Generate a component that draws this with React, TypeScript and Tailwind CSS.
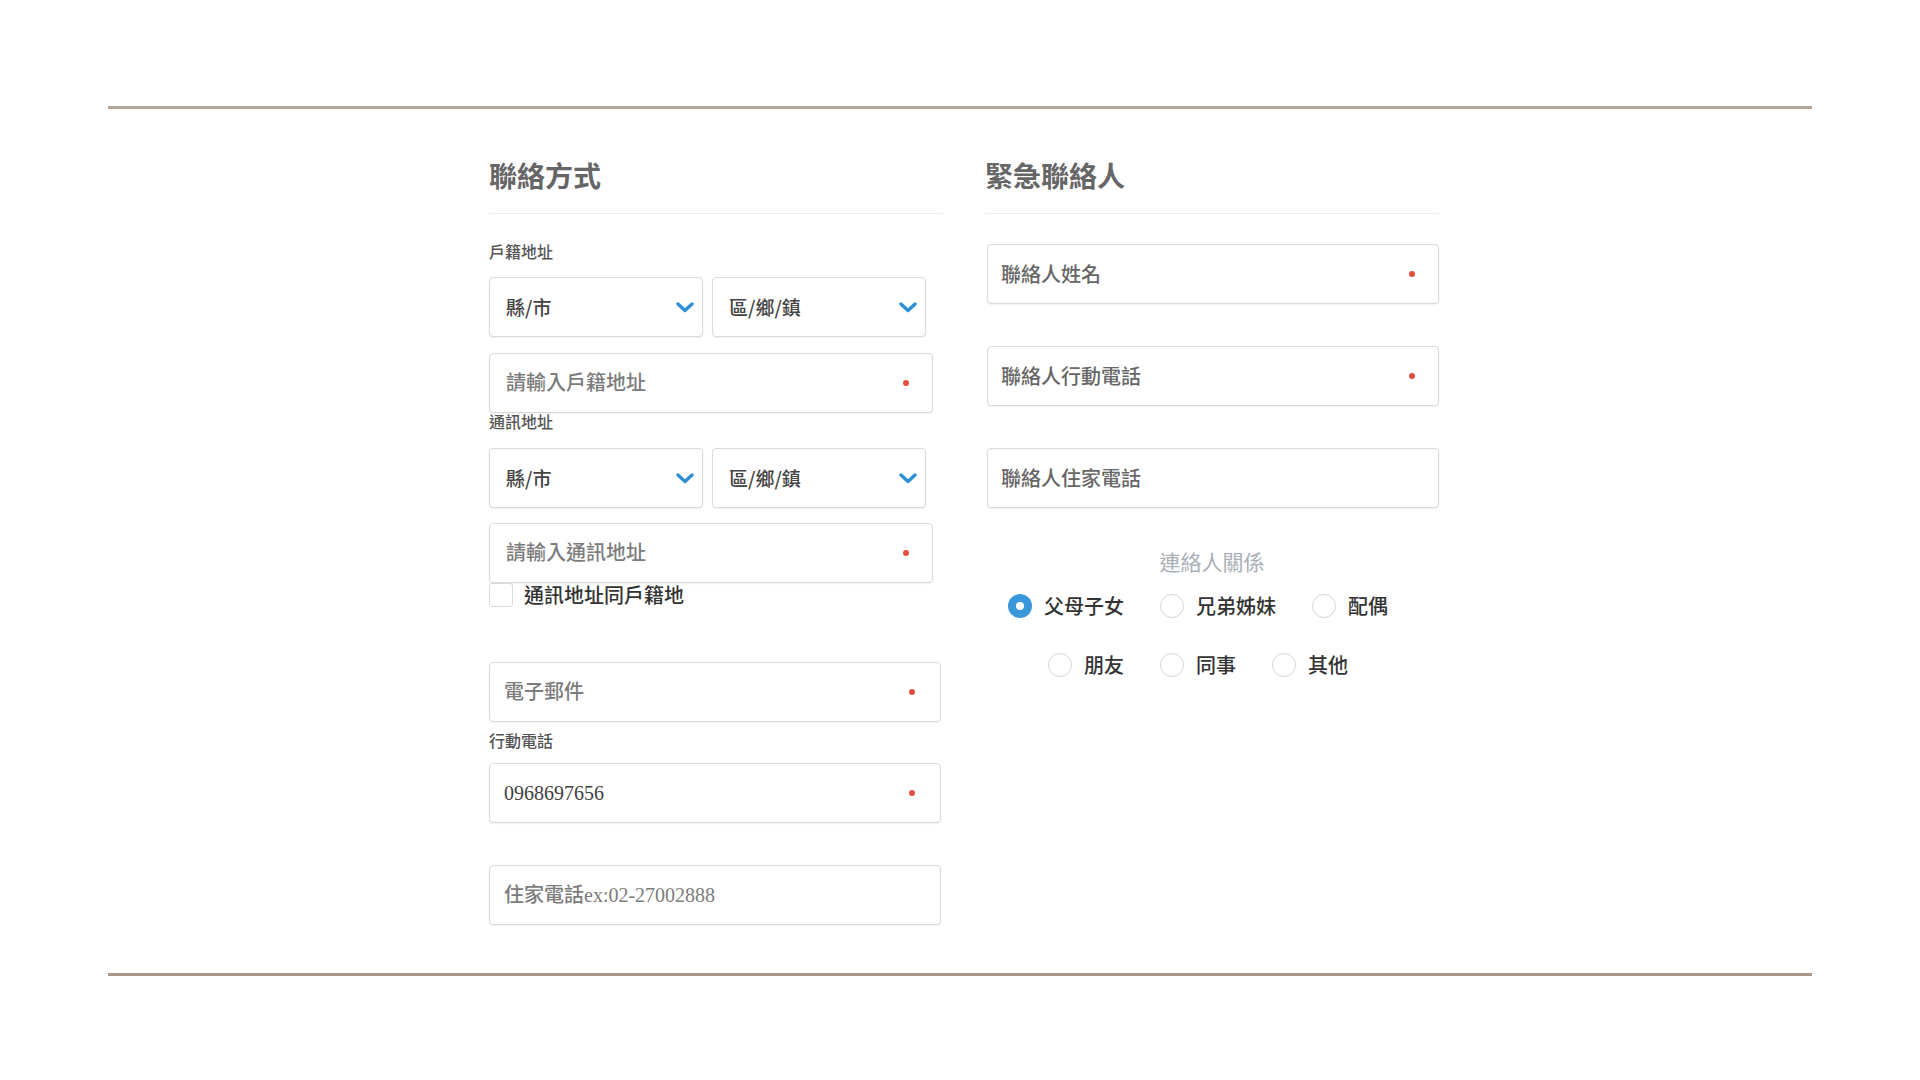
import React from 'react';

const Chevron = () => (
  <svg width="18" height="11" viewBox="0 0 18 11" fill="none">
    <path d="M2 2 L9 8.5 L16 2" stroke="#2d8fd6" strokeWidth="3.4" strokeLinecap="round" strokeLinejoin="round" />
  </svg>
);

const Dot = () => <span className="w-[6px] h-[6px] rounded-full bg-[#e0503f] shrink-0" />;

type FieldProps = {
  placeholder?: string;
  value?: string;
  required?: boolean;
  className?: string;
  tone?: 'light' | 'dark';
};

const Field = ({ placeholder, value, required, className = '', tone = 'light' }: FieldProps) => (
  <div
    className={`flex items-center h-[60px] bg-white border border-[#dadada] rounded-[4px] shadow-[0_1px_2px_rgba(0,0,0,0.06)] ${className}`}
  >
    <input
      readOnly
      defaultValue={value}
      placeholder={placeholder}
      className={`flex-1 min-w-0 bg-transparent outline-none text-[20px] font-medium text-[#3f3f3f] ${
        tone === 'dark'
          ? "font-['Noto_Sans_CJK_TC',sans-serif] placeholder:text-[#666]"
          : "font-['Liberation_Serif','Noto_Sans_CJK_TC',serif] placeholder:text-[#7c7c7c]"
      }`}
    />
    {required && <Dot />}
  </div>
);

const Select = ({ label }: { label: string }) => (
  <div className="flex items-center justify-between w-[214px] h-[60px] pl-[16px] pr-[8px] bg-white border border-[#dadada] rounded-[4px] shadow-[0_1px_2px_rgba(0,0,0,0.06)]">
    <span className="text-[19px] font-medium text-[#444]">{label}</span>
    <Chevron />
  </div>
);

const Radio = ({ label, checked }: { label: string; checked?: boolean }) => (
  <label className="flex items-center gap-[12px] mr-[36px]">
    {checked ? (
      <span className="w-[24px] h-[24px] rounded-full bg-[#3a97dc] flex items-center justify-center">
        <span className="w-[8px] h-[8px] rounded-full bg-white" />
      </span>
    ) : (
      <span className="w-[24px] h-[24px] rounded-full border border-[#d2d6da] bg-white" />
    )}
    <span className="text-[20px] font-medium text-[#333]">{label}</span>
  </label>
);

const SectionTitle = ({ children }: { children: React.ReactNode }) => (
  <>
    <h2 className="mt-[46px] text-[28px] leading-[40px] font-bold text-[#666]">{children}</h2>
    <div className="mt-[18px] h-px bg-[#ececec]" />
  </>
);

const Label = ({ children, className = '' }: { children: React.ReactNode; className?: string }) => (
  <div className={`text-[16px] leading-[16px] font-medium text-[#555] ${className}`}>{children}</div>
);

export default function App() {
  return (
    <div className="min-h-screen bg-white pt-[106px] font-['Noto_Sans_CJK_TC',sans-serif]">
      <div className="mx-[108px] h-[3px] bg-[#b5a698]" />

      <div className="flex justify-center pl-[8px]">
        {/* 聯絡方式 */}
        <div className="w-[454px]">
          <SectionTitle>聯絡方式</SectionTitle>

          <Label className="mt-[29px]">戶籍地址</Label>
          <div className="mt-[18px] flex gap-[9px]">
            <Select label="縣/市" />
            <Select label="區/鄉/鎮" />
          </div>
          <Field className="mt-[16px] w-[444px] pl-[16px] pr-[23px]" placeholder="請輸入戶籍地址" required />

          <Label>通訊地址</Label>
          <div className="mt-[19px] flex gap-[9px]">
            <Select label="縣/市" />
            <Select label="區/鄉/鎮" />
          </div>
          <Field className="mt-[15px] w-[444px] pl-[16px] pr-[23px]" placeholder="請輸入通訊地址" required />

          <label className="flex items-center h-[24px]">
            <span className="w-[24px] h-[24px] rounded-[3px] border border-[#dadada] bg-white" />
            <span className="ml-[11px] text-[20px] font-medium text-[#333]">通訊地址同戶籍地</span>
          </label>

          <Field className="mt-[55px] w-[452px] pl-[14px] pr-[25px]" placeholder="電子郵件" required />
          <Label className="mt-[10px]">行動電話</Label>
          <Field className="mt-[15px] w-[452px] pl-[14px] pr-[25px]" value="0968697656" required />
          <Field className="mt-[42px] w-[452px] pl-[14px] pr-[25px]" placeholder="住家電話ex:02-27002888" />
        </div>

        {/* 緊急聯絡人 */}
        <div className="w-[454px] ml-[42px]">
          <SectionTitle>緊急聯絡人</SectionTitle>

          <Field className="mt-[30px] w-[452px] ml-[2px] pl-[13px] pr-[23px]" placeholder="聯絡人姓名" required tone="dark" />
          <Field className="mt-[42px] w-[452px] ml-[2px] pl-[13px] pr-[23px]" placeholder="聯絡人行動電話" required tone="dark" />
          <Field className="mt-[42px] w-[452px] ml-[2px] pl-[13px] pr-[23px]" placeholder="聯絡人住家電話" tone="dark" />

          <div className="mt-[39px] text-center text-[21px] leading-[28px] text-[#a9b0b8]">連絡人關係</div>
          <div className="mt-[16px] h-[30px] flex justify-center items-center pl-[8px]">
            <Radio label="父母子女" checked />
            <Radio label="兄弟姊妹" />
            <Radio label="配偶" />
          </div>
          <div className="mt-[29px] h-[30px] flex justify-center items-center pl-[8px]">
            <Radio label="朋友" />
            <Radio label="同事" />
            <Radio label="其他" />
          </div>
        </div>
      </div>

      <div className="mx-[108px] mt-[48px] h-[3px] bg-[#a89686]" />
    </div>
  );
}
